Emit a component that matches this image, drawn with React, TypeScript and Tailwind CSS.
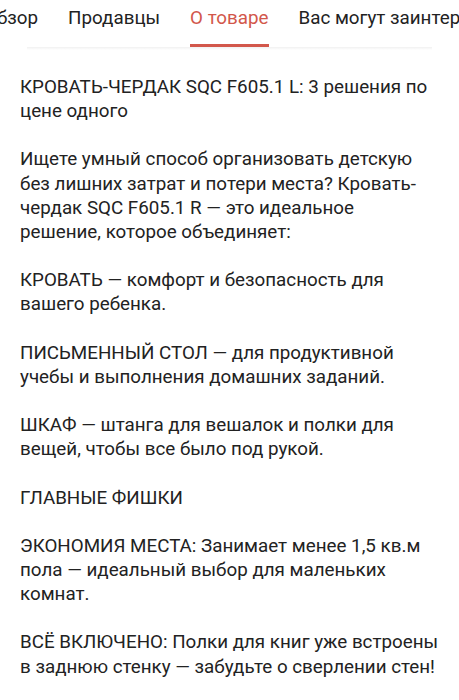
const tabs = ['Обзор', 'Продавцы', 'О товаре', 'Вас могут заинтересовать'];

const paragraphs: React.ReactNode[] = [
  'КРОВАТЬ-ЧЕРДАК SQC F605.1 L: 3 решения по цене одного',
  <>
    Ищете умный способ организовать детскую без лишних затрат и потери места? Кровать-чердак SQC F605.1 R — это
    идеальное
    <br />
    решение, которое объединяет:
  </>,
  'КРОВАТЬ — комфорт и безопасность для вашего ребенка.',
  'ПИСЬМЕННЫЙ СТОЛ — для продуктивной учебы и выполнения домашних заданий.',
  'ШКАФ — штанга для вешалок и полки для вещей, чтобы все было под рукой.',
  'ГЛАВНЫЕ ФИШКИ',
  'ЭКОНОМИЯ МЕСТА: Занимает менее 1,5 кв.м пола — идеальный выбор для маленьких комнат.',
  'ВСЁ ВКЛЮЧЕНО: Полки для книг уже встроены в заднюю стенку — забудьте о сверлении стен!',
];

export default function App() {
  const active = 'О товаре';

  return (
    <div className="w-[459px] h-[700px] overflow-hidden bg-white font-['Roboto',sans-serif] text-[#222]">
      {/* tabs */}
      <div className="relative">
        <div className="flex -ml-[31px] whitespace-nowrap">
          {tabs.map((t) => (
            <div
              key={t}
              className={`px-[15px] pt-[6px] text-[18.8px] leading-[24px] shrink-0 ${
                t === active ? 'text-[#d2574b]' : 'text-[#222]'
              }`}
            >
              <div className="pb-[14px]">{t}</div>
              <div className={`h-[3px] ${t === active ? 'bg-[#d2574b]' : 'bg-transparent'}`} />
            </div>
          ))}
        </div>
        <div className="mx-[27px] h-[3px] bg-gradient-to-b from-[#f1f1f1] to-white" />
      </div>

      {/* description */}
      <div className="pl-5 pr-4 pt-[25px] flex flex-col gap-[24.15px] text-[18.8px] leading-[24.15px]">
        {paragraphs.map((p, i) => (
          <p key={i}>{p}</p>
        ))}
      </div>
    </div>
  );
}
